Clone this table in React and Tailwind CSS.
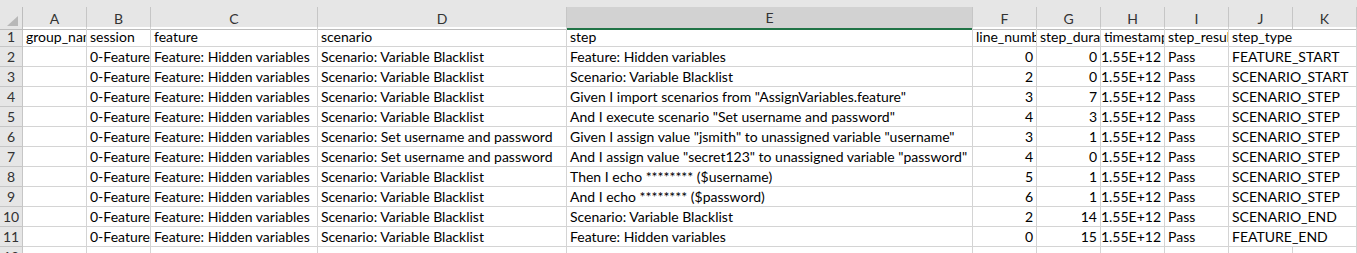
import React from "react";

const cols = "grid grid-cols-[23px_64px_64px_167px_249px_406px_64px_64px_64px_64px_64px_64px]";

const letters = ["A", "B", "C", "D", "E", "F", "G", "H", "I", "J", "K"];

const rows = [
  ["group_name", "session", "feature", "scenario", "step", "line_number", "step_duration", "timestamp", "step_result", "step_type"],
  ["", "0-Feature", "Feature: Hidden variables", "Scenario: Variable Blacklist", "Feature: Hidden variables", 0, 0, "1.55E+12", "Pass", "FEATURE_START"],
  ["", "0-Feature", "Feature: Hidden variables", "Scenario: Variable Blacklist", "Scenario: Variable Blacklist", 2, 0, "1.55E+12", "Pass", "SCENARIO_START"],
  ["", "0-Feature", "Feature: Hidden variables", "Scenario: Variable Blacklist", 'Given I import scenarios from "AssignVariables.feature"', 3, 7, "1.55E+12", "Pass", "SCENARIO_STEP"],
  ["", "0-Feature", "Feature: Hidden variables", "Scenario: Variable Blacklist", 'And I execute scenario "Set username and password"', 4, 3, "1.55E+12", "Pass", "SCENARIO_STEP"],
  ["", "0-Feature", "Feature: Hidden variables", "Scenario: Set username and password", 'Given I assign value "jsmith" to unassigned variable "username"', 3, 1, "1.55E+12", "Pass", "SCENARIO_STEP"],
  ["", "0-Feature", "Feature: Hidden variables", "Scenario: Set username and password", 'And I assign value "secret123" to unassigned variable "password"', 4, 0, "1.55E+12", "Pass", "SCENARIO_STEP"],
  ["", "0-Feature", "Feature: Hidden variables", "Scenario: Variable Blacklist", "Then I echo ******** ($username)", 5, 1, "1.55E+12", "Pass", "SCENARIO_STEP"],
  ["", "0-Feature", "Feature: Hidden variables", "Scenario: Variable Blacklist", "And I echo ******** ($password)", 6, 1, "1.55E+12", "Pass", "SCENARIO_STEP"],
  ["", "0-Feature", "Feature: Hidden variables", "Scenario: Variable Blacklist", "Scenario: Variable Blacklist", 2, 14, "1.55E+12", "Pass", "SCENARIO_END"],
  ["", "0-Feature", "Feature: Hidden variables", "Scenario: Variable Blacklist", "Feature: Hidden variables", 0, 15, "1.55E+12", "Pass", "FEATURE_END"],
];

function Cell({ value, num, span }) {
  const right = num || value === "1.55E+12";
  return (
    <div
      className={
        "h-[20px] border-b border-[#d4d4d4] overflow-hidden whitespace-nowrap flex items-center " +
        (span ? "col-span-2 border-r " : "border-r ") +
        (right ? "justify-end pr-[3px] pl-[2px]" : "pl-[3px]")
      }
    >
      {value}
    </div>
  );
}

export default function App() {
  return (
    <div
      className="w-[1357px] h-[253px] overflow-hidden bg-white text-[14px] text-black"
      style={{ fontFamily: "Lato, 'Open Sans', sans-serif" }}
    >
      <div className="h-[7px] bg-[#e6e6e6]" />
      <div className={cols + " bg-[#e6e6e6] text-[#333] h-[20px]"}>
        <div className="relative border-r border-b border-[#bdbdbd]">
          <div className="absolute right-[4px] bottom-[3px] w-0 h-0 border-l-[11px] border-l-transparent border-b-[10px] border-b-[#b8b8b8]" />
        </div>
        {letters.map((l) => (
          <div
            key={l}
            className={
              "flex items-center justify-center border-r border-[#c6c6c6] " +
              (l === "E" ? "bg-[#d2d2d2] border-b-2 border-b-[#217346]" : "border-b border-b-[#bdbdbd]")
            }
          >
            {l}
          </div>
        ))}
      </div>
      {[...rows, ["", "", "", "", "", "", "", "", "", ""]].map((r, i) => (
        <div key={i} className={cols}>
          <div className="h-[20px] bg-[#e6e6e6] border-r border-b border-[#c6c6c6] flex items-center justify-center text-[#333]">
            {i + 1}
          </div>
          {r.map((v, j) =>
            j === 9 && i < 11 ? (
              <Cell key={j} value={v} span />
            ) : (
              <Cell key={j} value={v} num={typeof v === "number"} />
            )
          )}
          {i >= 11 && <Cell value="" />}
        </div>
      ))}
    </div>
  );
}
